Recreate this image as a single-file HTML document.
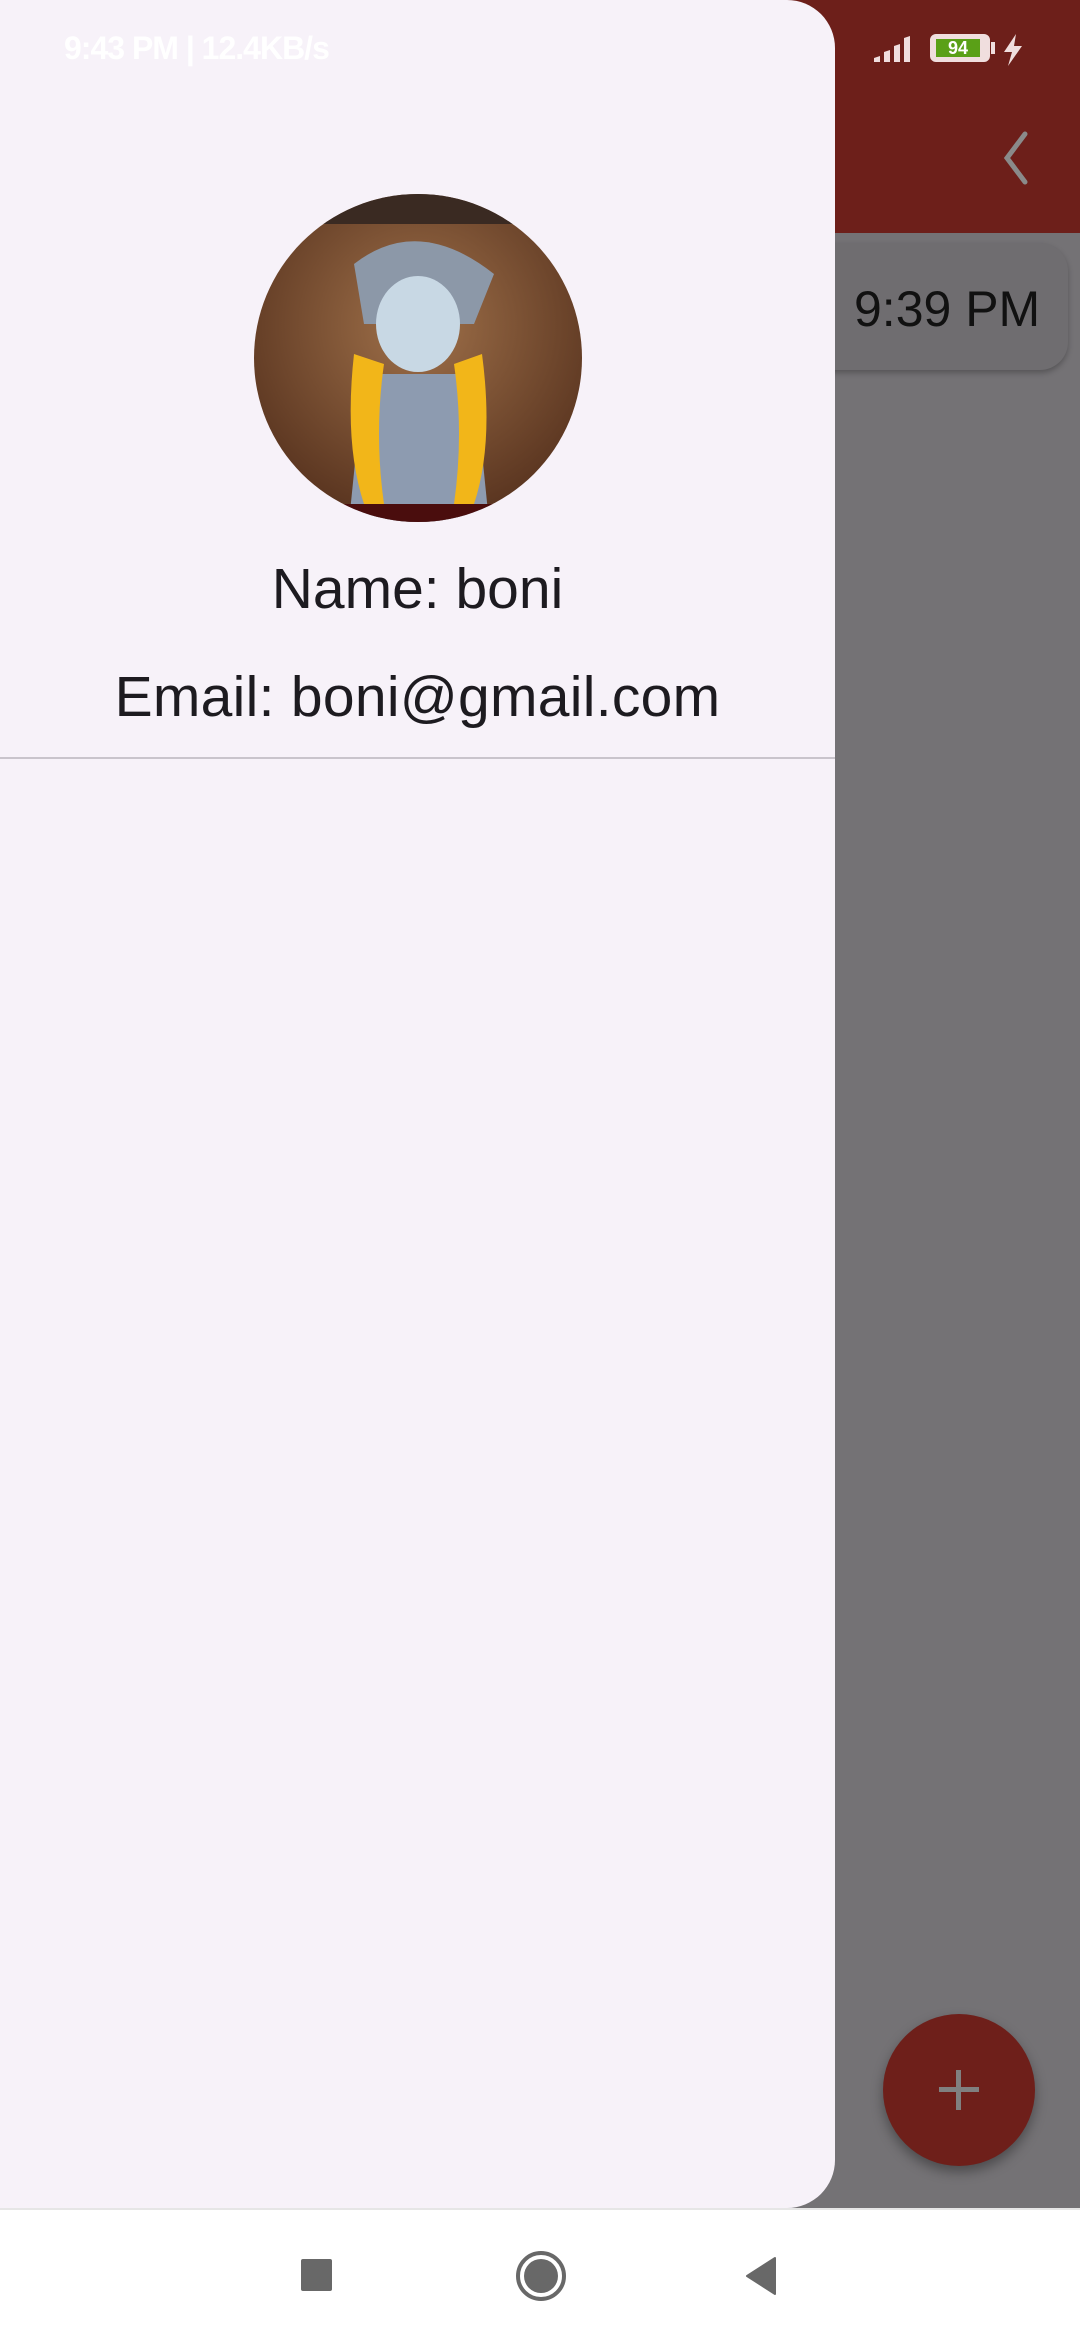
<!DOCTYPE html>
<html><head><meta charset="utf-8"><style>
body{margin:0;width:1080px;height:2340px;position:relative;overflow:hidden;background:#747275;font-family:"Liberation Sans",sans-serif}
.abs{position:absolute}
</style></head><body>
<div class="abs" style="left:0;top:0;width:1080px;height:233px;background:#6d1f1a"></div>
<svg class="abs" style="left:995px;top:130px" width="40" height="56" viewBox="0 0 40 56"><path d="M30 4 L12 28 L30 52" stroke="#8a8a8a" stroke-width="5" fill="none" stroke-linecap="round"/></svg>
<div class="abs" style="left:780px;top:243px;width:288px;height:127px;background:#6f6d70;border-radius:28px;box-shadow:0 3px 6px rgba(0,0,0,.25)"></div>
<div class="abs" style="left:854px;top:280px;font-size:50px;color:#111">9:39 PM</div>
<div class="abs" style="left:883px;top:2014px;width:152px;height:152px;border-radius:50%;background:#6e1f1a;box-shadow:0 6px 12px rgba(0,0,0,.35)"></div>
<div class="abs" style="left:939px;top:2087px;width:40px;height:5px;background:#808080"></div>
<div class="abs" style="left:956px;top:2070px;width:5px;height:40px;background:#808080"></div>

<div class="abs" style="left:0;top:0;width:835px;height:2208px;background:#f7f2f9;border-radius:0 48px 48px 0"></div>
<div class="abs" style="left:64px;top:30px;font-size:32px;font-weight:bold;color:#fff;letter-spacing:-1px">9:43 PM | 12.4KB/s</div>
<!-- status icons right -->
<div class="abs" style="left:930px;top:34px;width:60px;height:28px;border:4px solid #f0dede;border-radius:6px;box-sizing:border-box;background:#f0dede"></div>
<div class="abs" style="left:936px;top:39px;width:44px;height:18px;background:#5aa017;color:#fff;font-size:18px;font-weight:bold;text-align:center;line-height:18px">94</div>
<div class="abs" style="left:991px;top:42px;width:4px;height:12px;background:#f0dede"></div>
<svg class="abs" style="left:1000px;top:32px" width="26" height="36" viewBox="0 0 26 36"><path d="M16 2 L4 20 L12 20 L8 34 L22 14 L14 14 Z" fill="#f0dede"/></svg>
<svg class="abs" style="left:872px;top:34px" width="44" height="30" viewBox="0 0 44 30"><path d="M2 28 L8 28 L8 22 L2 24Z M12 28 L18 28 L18 16 L12 18Z M22 28 L28 28 L28 10 L22 12Z M32 28 L38 28 L38 2 L32 4Z" fill="#f0dede"/></svg>

<svg class="abs" style="left:254px;top:194px" width="328" height="328" viewBox="0 0 328 328">
<defs><clipPath id="c"><circle cx="164" cy="164" r="164"/></clipPath>
<radialGradient id="g" cx="50%" cy="40%" r="60%"><stop offset="0" stop-color="#a0714a"/><stop offset="1" stop-color="#5a3520"/></radialGradient></defs>
<g clip-path="url(#c)">
<rect width="328" height="328" fill="url(#g)"/>
<path d="M100 70 Q164 20 240 80 L220 130 L110 130 Z" fill="#8c98a8"/>
<ellipse cx="164" cy="130" rx="42" ry="48" fill="#c8d8e4"/>
<path d="M110 180 L220 180 L235 328 L95 328 Z" fill="#8d9bb0"/>
<path d="M100 160 Q90 250 110 310 L130 310 Q120 240 130 170 Z" fill="#f2b619"/>
<path d="M228 160 Q240 250 220 310 L200 310 Q210 240 200 170 Z" fill="#f2b619"/>
<rect x="0" y="310" width="328" height="18" fill="#4a0d0d"/>
<rect x="0" y="0" width="328" height="30" fill="#3a2a22"/>
</g></svg>

<div class="abs" style="left:0;top:556px;width:835px;text-align:center;font-size:57px;color:#1d1b20">Name: boni</div>
<div class="abs" style="left:0;top:664px;width:835px;text-align:center;font-size:57px;color:#1d1b20;letter-spacing:0.3px">Email: boni@gmail.com</div>
<div class="abs" style="left:0;top:757px;width:835px;height:2px;background:#c9c4cc"></div>

<div class="abs" style="left:0;top:2208px;width:1080px;height:132px;background:#fff;border-top:2px solid #e6e6e6"></div>
<div class="abs" style="left:301px;top:2259px;width:31px;height:32px;background:#686868;border-radius:2px"></div>
<div class="abs" style="left:516px;top:2251px;width:42px;height:42px;border:4px solid #686868;border-radius:50%;box-sizing:content-box;background:#fff"></div>
<div class="abs" style="left:524px;top:2259px;width:34px;height:34px;border-radius:50%;background:#686868"></div>
<svg class="abs" style="left:743px;top:2256px" width="34" height="40" viewBox="0 0 34 40"><path d="M32 2 L32 38 L4 20 Z" fill="#686868" stroke="#686868" stroke-linejoin="round" stroke-width="2"/></svg>
</body></html>
